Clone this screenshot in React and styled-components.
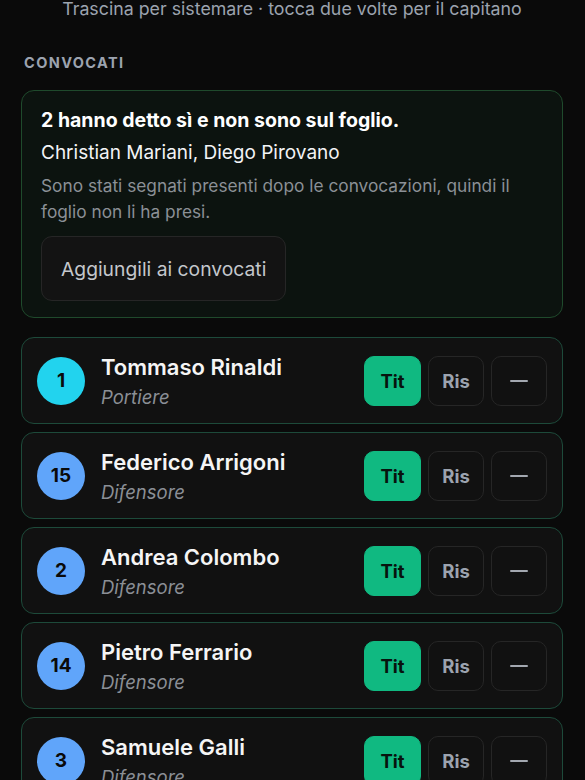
import React from "react";
import styled, { createGlobalStyle } from "styled-components";

const Global = createGlobalStyle`
  html, body { margin: 0; padding: 0; background: #0a0a0a; }
  body { font-family: Inter, "Noto Sans", sans-serif; color: #f3f4f6; overflow: hidden; }
`;

const Page = styled.div`
  display: flex;
  flex-direction: column;
  padding: 0 22px 0 21px;
  width: 585px;
  box-sizing: border-box;
`;

const Hint = styled.div`
  margin-top: -3px;
  text-align: center;
  font-size: 17.8px;
  line-height: 24px;
  color: #9ca3af;
  white-space: nowrap;
`;

const SectionLabel = styled.div`
  margin: 33px 0 0 3px;
  font-size: 14.5px;
  font-weight: 700;
  letter-spacing: 1.4px;
  color: #9ca3af;
  line-height: 18px;
`;

const Notice = styled.div`
  margin-top: 18px;
  border: 1px solid #1f4a2c;
  background: #0c130f;
  border-radius: 13px;
  padding: 16px 19px 16px 19px;
  display: flex;
  flex-direction: column;
  align-items: flex-start;
`;

const NoticeTitle = styled.div`
  font-size: 19.5px;
  font-weight: 700;
  line-height: 26px;
  color: #ffffff;
`;

const NoticeNames = styled.div`
  margin-top: 7px;
  font-size: 19px;
  line-height: 26px;
  color: #f3f4f6;
`;

const NoticeText = styled.div`
  margin-top: 7px;
  font-size: 17.3px;
  line-height: 26px;
  color: #8b9096;
`;

const AddButton = styled.button`
  margin-top: 11px;
  height: 65px;
  padding: 0 19px;
  border-radius: 11px;
  border: 1px solid #262626;
  background: #131313;
  color: #c4c7cc;
  font-family: inherit;
  font-size: 19.3px;
`;

const List = styled.div`
  margin-top: 19px;
  display: flex;
  flex-direction: column;
  gap: 8px;
`;

const Card = styled.div`
  height: 87px;
  box-sizing: border-box;
  border: 1px solid #1d4a3a;
  background: #111111;
  border-radius: 13px;
  padding: 0 15px;
  display: flex;
  align-items: center;
`;

const Avatar = styled.div`
  width: 48px;
  height: 48px;
  border-radius: 50%;
  background: ${(p) => (p.$keeper ? "#22d3ee" : "#60a5fa")};
  color: #0a0a0a;
  font-weight: 700;
  font-size: 19px;
  display: flex;
  align-items: center;
  justify-content: center;
  flex-shrink: 0;
`;

const Info = styled.div`
  margin-left: 16px;
  flex: 1;
  display: flex;
  flex-direction: column;
  gap: 4px;
`;

const Name = styled.div`
  font-size: 22px;
  font-weight: 600;
  line-height: 28px;
  color: #f5f5f5;
`;

const Role = styled.div`
  font-size: 18.5px;
  font-style: italic;
  line-height: 24px;
  color: #8b8f96;
`;

const Buttons = styled.div`
  display: flex;
  gap: 7px;
  margin-top: 1px;
`;

const Choice = styled.button`
  width: ${(p) => (p.$active ? "57px" : "56px")};
  height: 50px;
  border-radius: 10px;
  border: 1px solid ${(p) => (p.$active ? "#10b981" : "#262626")};
  background: ${(p) => (p.$active ? "#10b981" : "#111111")};
  color: ${(p) => (p.$active ? "#07130e" : "#9ca3af")};
  font-family: inherit;
  font-size: 18.5px;
  font-weight: 700;
  display: flex;
  align-items: center;
  justify-content: center;
  padding: 0;
`;

const Dash = styled.span`
  display: block;
  width: 18px;
  height: 2px;
  background: #a3a8b0;
  border-radius: 1px;
`;

const players = [
  { n: 1, name: "Tommaso Rinaldi", role: "Portiere", keeper: true },
  { n: 15, name: "Federico Arrigoni", role: "Difensore" },
  { n: 2, name: "Andrea Colombo", role: "Difensore" },
  { n: 14, name: "Pietro Ferrario", role: "Difensore" },
  { n: 3, name: "Samuele Galli", role: "Difensore" },
];

export default function App() {
  return (
    <>
      <Global />
      <Page>
        <Hint>Trascina per sistemare · tocca due volte per il capitano</Hint>
        <SectionLabel>CONVOCATI</SectionLabel>
        <Notice>
          <NoticeTitle>2 hanno detto sì e non sono sul foglio.</NoticeTitle>
          <NoticeNames>Christian Mariani, Diego Pirovano</NoticeNames>
          <NoticeText>
            Sono stati segnati presenti dopo le convocazioni, quindi il foglio non li ha presi.
          </NoticeText>
          <AddButton>Aggiungili ai convocati</AddButton>
        </Notice>
        <List>
          {players.map((p) => (
            <Card key={p.n}>
              <Avatar $keeper={p.keeper}>{p.n}</Avatar>
              <Info>
                <Name>{p.name}</Name>
                <Role>{p.role}</Role>
              </Info>
              <Buttons>
                <Choice $active>Tit</Choice>
                <Choice>Ris</Choice>
                <Choice>
                  <Dash />
                </Choice>
              </Buttons>
            </Card>
          ))}
        </List>
      </Page>
    </>
  );
}
